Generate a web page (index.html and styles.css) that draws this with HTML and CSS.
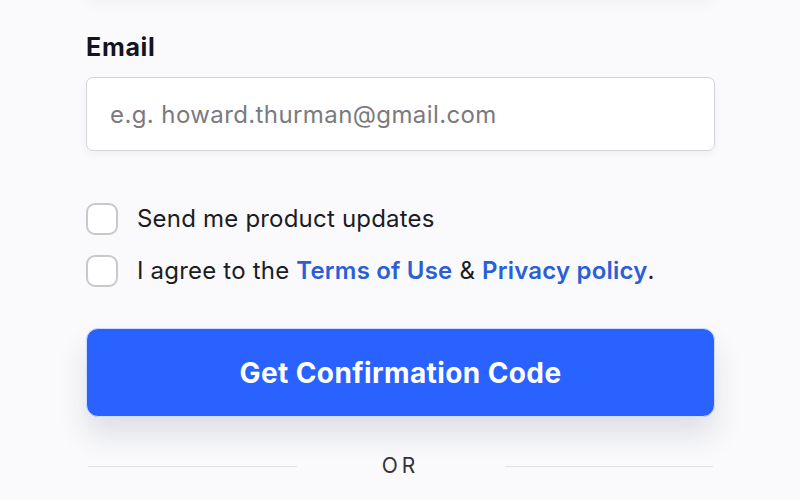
FILE: index.html
```html
<!DOCTYPE html>
<html lang="en">
<head>
<meta charset="utf-8">
<title>Sign up</title>
<link rel="stylesheet" href="styles.css">
</head>
<body>
<div class="page">
  <div class="top-ghost"></div>
  <form class="form">
    <label class="label" for="email">Email</label>
    <input class="input" id="email" type="text" placeholder="e.g. howard.thurman@gmail.com">
    <div class="checks">
      <label class="check"><span class="box"></span><span>Send me product updates</span></label>
      <label class="check"><span class="box"></span><span>I agree to the <a class="link" href="#">Terms of Use</a> &amp; <a class="link" href="#">Privacy policy</a>.</span></label>
    </div>
    <button class="btn" type="button">Get Confirmation Code</button>
    <div class="divider"><span class="line"></span><span class="or">OR</span><span class="line"></span></div>
  </form>
</div>
</body>
</html>
```
FILE: styles.css
```css
* { box-sizing: border-box; }
html, body { margin: 0; padding: 0; }
body {
  background: #fafafc;
  font-family: Inter, "Noto Sans", sans-serif;
  color: #16161f;
  width: 800px;
  height: 500px;
  overflow: hidden;
}
.page {
  padding: 0 85px 0 86px;
  position: relative;
}
.top-ghost {
  position: absolute;
  left: 86px;
  right: 86px;
  top: -40px;
  height: 40px;
  border-radius: 10px;
  background: #fafafc;
  box-shadow: 0 6px 14px rgba(0, 0, 0, 0.03);
}
.form {
  display: flex;
  flex-direction: column;
  padding-top: 31px;
}
.label {
  font-size: 25px;
  font-weight: 700;
  line-height: 32px;
  letter-spacing: 0.7px;
  color: #14141f;
}
.input {
  margin-top: 14px;
  height: 74px;
  border: 1px solid #d3d3d8;
  border-radius: 7px;
  background: #fff;
  padding: 0 23px;
  font-family: Inter, "Noto Sans", sans-serif;
  font-size: 24px;
  letter-spacing: 0.4px;
  color: #333;
  box-shadow: 0 4px 10px rgba(0, 0, 0, 0.04);
  outline: none;
}
.input::placeholder { color: #7a7a80; }
.checks {
  display: flex;
  flex-direction: column;
  gap: 20px;
  margin-top: 52px;
}
.check {
  display: flex;
  align-items: center;
  gap: 19px;
  font-size: 24px;
  letter-spacing: 0.2px;
  line-height: 32px;
  color: #1c1c24;
}
.box {
  width: 32px;
  height: 32px;
  flex: none;
  border: 2px solid #c9c9cc;
  border-radius: 9px;
  background: #fff;
}
.link {
  color: #2b5fd6;
  font-weight: 600;
  text-decoration: none;
}
.btn {
  margin-top: 41px;
  height: 89px;
  border: 1px solid #cddcff;
  border-radius: 12px;
  background: #2962ff;
  color: #fff;
  font-family: Inter, "Noto Sans", sans-serif;
  font-size: 28px;
  letter-spacing: 0.4px;
  font-weight: 700;
  box-shadow: 0 18px 30px rgba(20, 30, 60, 0.12);
}
.divider {
  display: flex;
  align-items: center;
  margin-top: 37px;
  padding: 0 2px;
}
.line {
  flex: 1;
  height: 1px;
  background: #e2e2e6;
}
.or {
  width: 208px;
  text-align: center;
  font-size: 21px;
  letter-spacing: 4px;
  color: #333338;
  line-height: 24px;
}
```
